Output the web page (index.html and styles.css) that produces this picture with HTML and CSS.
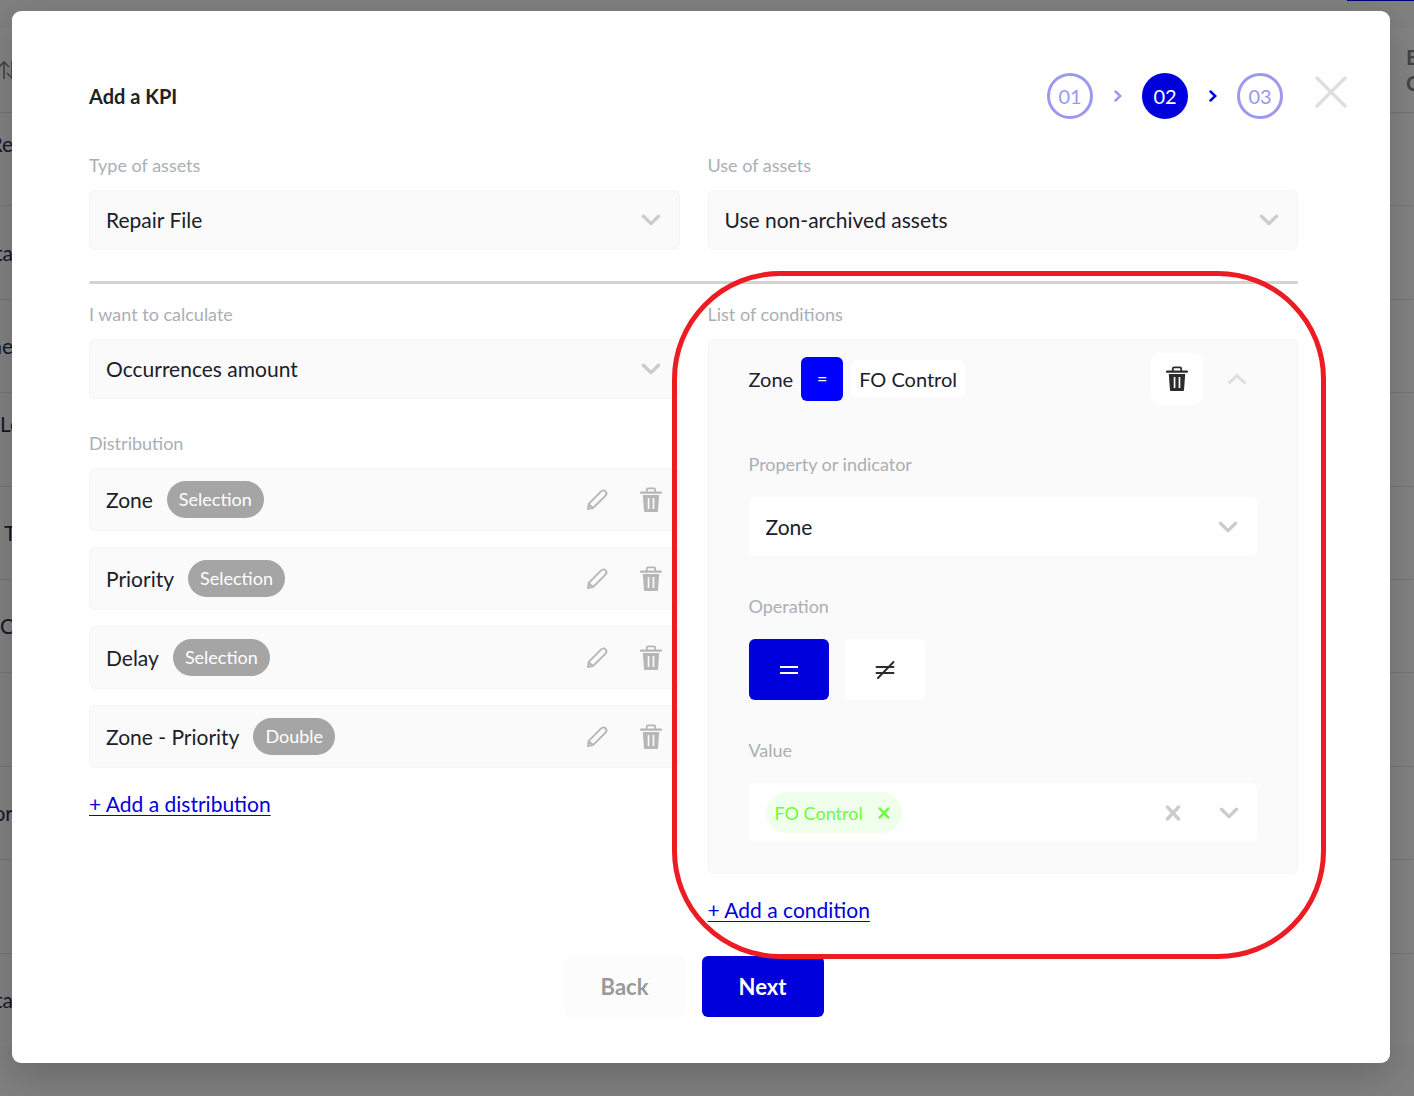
FILE: index.html
```html
<!DOCTYPE html>
<html lang="en">
<head>
<meta charset="utf-8">
<title>Add a KPI</title>
<meta name="viewport" content="width=device-width, initial-scale=1">
<link rel="stylesheet" href="styles.css">
</head>
<body>
<svg class="sprite" aria-hidden="true">
  <symbol id="chevron" viewBox="0 0 20 12"><path d="M2.500 2.300 10 9.600 17.500 2.300" fill="none" stroke="currentColor" stroke-width="3.400" stroke-linecap="round" stroke-linejoin="round"/></symbol>
  <symbol id="chevron-up" viewBox="0 0 20 12"><path d="M1.600 10.400 10 2.600l8.400 7.800" fill="none" stroke="currentColor" stroke-width="2.800"/></symbol>
  <symbol id="step-arrow" viewBox="0 0 8 12"><path d="M1.500 1.500 6.300 6 1.500 10.500" fill="none" stroke="currentColor" stroke-width="2.400" stroke-linecap="round"/></symbol>
  <symbol id="cross" viewBox="0 0 16 16"><path d="M2.400 2 13.600 14M13.600 2 2.400 14" fill="none" stroke="currentColor" stroke-width="3.400" stroke-linecap="round"/></symbol>
  <symbol id="pencil" viewBox="0 0 22 22"><path d="M2 20 2.700 14.800 14.900 2.600C16.400 1.200 18.200 1.100 19.500 2.300 20.800 3.600 20.600 5.500 19.300 6.800L7.200 18.900ZM2.700 15.200 6.900 18.900" fill="none" stroke="currentColor" stroke-width="1.900" stroke-linejoin="round"/></symbol>
  <symbol id="trash" viewBox="0 0 22 26"><path d="M6.800 5.500V2.600Q6.800 1.300 8.200 1.300H13.800Q15.200 1.300 15.200 2.600V5.500" fill="none" stroke="currentColor" stroke-width="1.800"/><rect x="0" y="4.600" width="22" height="2.200" rx="1" fill="currentColor"/><path fill="currentColor" fill-rule="evenodd" d="M2.800 8H19.200L18 24.200Q17.900 25 17 25H5Q4.100 25 4 24.200ZM7.700 11V22H9.400V11ZM12.600 11V22H14.300V11Z"/></symbol>
</svg>

<div class="backdrop" aria-hidden="true">
  <div class="backdrop-bar"><span class="backdrop-action"></span></div>
  <div class="backdrop-head">
    <svg class="sort-icon" viewBox="0 0 16 20"><path d="M4 19V2M-1 7 4 2 9 7M12 1V18M7 13 12 18 17 13" fill="none" stroke="currentColor" stroke-width="1.600"/></svg>
    <span>E<br>C</span>
  </div>
  <div class="backdrop-rows">
    <div class="backdrop-row"><span class="two-line">Re</span></div>
    <div class="backdrop-row"><span>ta</span></div>
    <div class="backdrop-row"><span>ne</span></div>
    <div class="backdrop-row row-start"><span class="two-line">Le</span></div>
    <div class="backdrop-row row-indent"><span>T</span></div>
    <div class="backdrop-row row-start"><span>C</span></div>
    <div class="backdrop-row"></div>
    <div class="backdrop-row"><span>or</span></div>
    <div class="backdrop-row"></div>
    <div class="backdrop-row"><span>ta</span></div>
  </div>
</div>

<main class="modal" role="dialog" aria-labelledby="title">
  <header class="modal-head">
    <h1 id="title">Add a KPI</h1>
    <ol class="steps">
      <li class="step">01</li>
      <li class="arrow faded"><svg><use href="#step-arrow"/></svg></li>
      <li class="step current">02</li>
      <li class="arrow"><svg><use href="#step-arrow"/></svg></li>
      <li class="step">03</li>
    </ol>
    <button class="icon-button close" type="button" aria-label="Close"><svg viewBox="0 0 32 32"><path d="M2 2 30 30M30 2 2 30" fill="none" stroke="currentColor" stroke-width="3.400" stroke-linecap="round"/></svg></button>
  </header>

  <form class="form">
    <div class="columns">
      <div class="field">
        <label for="asset-type">Type of assets</label>
        <div class="select"><select id="asset-type"><option>Repair File</option></select><svg><use href="#chevron"/></svg></div>
      </div>
      <div class="field">
        <label for="asset-use">Use of assets</label>
        <div class="select"><select id="asset-use"><option>Use non-archived assets</option></select><svg><use href="#chevron"/></svg></div>
      </div>
    </div>

    <hr>

    <div class="columns">
      <section>
        <div class="field">
          <label for="calculation">I want to calculate</label>
          <div class="select"><select id="calculation"><option>Occurrences amount</option></select><svg><use href="#chevron"/></svg></div>
        </div>
        <h2 class="distribution-title">Distribution</h2>
        <ul class="distributions">
          <li><span>Zone</span><span class="badge">Selection</span><button class="icon-button edit" type="button" aria-label="Edit Zone"><svg class="pencil"><use href="#pencil"/></svg></button><button class="icon-button" type="button" aria-label="Delete Zone"><svg class="trash"><use href="#trash"/></svg></button></li>
          <li><span>Priority</span><span class="badge">Selection</span><button class="icon-button edit" type="button" aria-label="Edit Priority"><svg class="pencil"><use href="#pencil"/></svg></button><button class="icon-button" type="button" aria-label="Delete Priority"><svg class="trash"><use href="#trash"/></svg></button></li>
          <li><span>Delay</span><span class="badge">Selection</span><button class="icon-button edit" type="button" aria-label="Edit Delay"><svg class="pencil"><use href="#pencil"/></svg></button><button class="icon-button" type="button" aria-label="Delete Delay"><svg class="trash"><use href="#trash"/></svg></button></li>
          <li><span>Zone - Priority</span><span class="badge">Double</span><button class="icon-button edit" type="button" aria-label="Edit Zone - Priority"><svg class="pencil"><use href="#pencil"/></svg></button><button class="icon-button" type="button" aria-label="Delete Zone - Priority"><svg class="trash"><use href="#trash"/></svg></button></li>
        </ul>
        <a class="add-link" href="#">+ Add a distribution</a>
      </section>

      <section class="conditions">
        <h2>List of conditions</h2>
        <div class="condition">
          <div class="condition-head">
            <span>Zone</span>
            <span class="operator">=</span>
            <span class="operand">FO Control</span>
            <button class="icon-button delete" type="button" aria-label="Delete condition"><svg class="trash"><use href="#trash"/></svg></button>
            <button class="icon-button collapse" type="button" aria-label="Collapse"><svg><use href="#chevron-up"/></svg></button>
          </div>
          <div class="field">
            <label for="property">Property or indicator</label>
            <div class="select"><select id="property"><option>Zone</option></select><svg><use href="#chevron"/></svg></div>
          </div>
          <div class="field">
            <h3>Operation</h3>
            <div class="operations">
              <button class="operation selected" type="button" aria-label="Equal"><svg viewBox="0 0 20 20"><path d="M1 7H19M1 13H19" fill="none" stroke="currentColor" stroke-width="2"/></svg></button>
              <button class="operation" type="button" aria-label="Not equal"><svg viewBox="0 0 20 20"><path d="M1.500 7H18.500M1.500 13H18.500M3 18 18.500 2" fill="none" stroke="currentColor" stroke-width="1.900" stroke-linecap="round"/></svg></button>
            </div>
          </div>
          <div class="field">
            <label for="value">Value</label>
            <div class="multi">
              <span class="chip">FO Control<button class="icon-button" type="button" aria-label="Remove FO Control"><svg><use href="#cross"/></svg></button></span>
              <input id="value" type="text">
              <button class="icon-button clear" type="button" aria-label="Clear"><svg><use href="#cross"/></svg></button>
              <button class="icon-button open" type="button" aria-label="Open"><svg><use href="#chevron"/></svg></button>
            </div>
          </div>
        </div>
        <a class="add-link" href="#">+ Add a condition</a>
        <div class="highlight"></div>
      </section>
    </div>

    <footer class="actions">
      <button class="action back" type="button">Back</button>
      <button class="action next" type="submit">Next</button>
    </footer>
  </form>
</main>
</body>
</html>
```
FILE: styles.css
```css
* { box-sizing: border-box; }

body {
  margin: 0;
  min-height: 100vh;
  padding: 11px 24px 32px 12px;
  position: relative;
  overflow-x: hidden;
  background: #808080;
  color: #1b202b;
  font: 21px/26px Lato, "Open Sans", sans-serif;
}

h1, h2, h3, ul, ol { margin: 0; padding: 0; }
ul, ol { list-style: none; }
svg { display: block; flex: none; }
button, input, select { font: inherit; color: inherit; }
.sprite { position: absolute; width: 0; height: 0; }

/* Dimmed page behind the dialog */
.backdrop {
  position: absolute;
  inset: 0;
  overflow: hidden;
  color: #16162c;
}
.backdrop-bar { height: 28px; display: flex; justify-content: flex-end; }
.backdrop-action { width: 67px; height: 1px; background: #000078; }
.backdrop-head {
  height: 85px;
  display: flex;
  justify-content: space-between;
  align-items: center;
  background: #838383;
  border-bottom: 1px solid #757575;
  color: #444;
  font-weight: 700;
}
.backdrop-head span { width: 8px; }
.sort-icon { width: 16px; height: 20px; }
.backdrop-rows { height: 933px; display: flex; flex-direction: column; background: #838383; }
.backdrop-row {
  flex: 1;
  display: flex;
  align-items: center;
  border-bottom: 1px solid #777;
}
.backdrop-row span { width: 13px; display: flex; justify-content: flex-end; line-height: 30px; }
.backdrop-row .two-line { height: 60px; }
.backdrop-row.row-start span, .backdrop-row.row-indent span { justify-content: flex-start; }
.row-indent { padding-left: 4px; }
.backdrop-row:last-child { border: 0; }

.modal {
  position: relative;
  padding: 62px 43px 46px 77px;
  border-radius: 9px;
  background: #fff;
  box-shadow: 0 12px 40px rgba(0, 0, 0, .2);
}

.modal-head { display: flex; align-items: center; height: 46px; margin-bottom: 34px; }
.modal-head h1 { font-size: 20px; line-height: 26px; color: #222; }
.steps { margin-left: auto; display: flex; align-items: center; }
.step {
  width: 46px;
  height: 46px;
  display: grid;
  place-items: center;
  border: 3px solid #9c98f0;
  border-radius: 50%;
  color: #9c98f0;
  font-size: 20px;
}
.step.current { background: #0000dc; border-color: #0000dc; color: #fff; }
.arrow { width: 49px; display: grid; place-items: center; color: #0000dc; }
.arrow svg { width: 8px; height: 12px; }
.arrow.faded { color: #9c98f0; }

.icon-button {
  padding: 0;
  border: 0;
  background: none;
  display: grid;
  place-items: center;
  color: #b6b6b6;
  cursor: pointer;
}
.close { margin: 0 0 8px 32px; color: #dedede; }
.close svg { width: 32px; height: 32px; }
.pencil { width: 22px; height: 22px; }
.trash { width: 22px; height: 26px; }

.form { margin-right: 49px; }
.columns { display: grid; grid-template-columns: 1fr 1fr; gap: 28px; }
.field label, h2, h3 {
  display: block;
  margin-bottom: 13px;
  color: #a9afb6;
  font-size: 18px;
  font-weight: 400;
  line-height: 24px;
}
.select { display: grid; align-items: center; }
.select select {
  grid-area: 1 / 1;
  width: 100%;
  height: 60px;
  padding: 0 48px 0 16px;
  appearance: none;
  border: 1px solid #f4f5f5;
  border-radius: 6px;
  background: #fafafa;
}
.select svg {
  grid-area: 1 / 1;
  justify-self: end;
  margin-right: 19px;
  width: 20px;
  height: 12px;
  color: #ccc;
  pointer-events: none;
}
hr { height: 3px; margin: 31px 0 18px; border: 0; border-radius: 2px; background: #d3d3d3; }

.distribution-title { margin-top: 32px; }
.distributions { display: grid; gap: 16px; }
.distributions li {
  height: 63px;
  padding: 0 17px 0 16px;
  display: flex;
  align-items: center;
  border: 1px solid #f4f5f5;
  border-radius: 6px;
  background: #fafafa;
}
.badge {
  height: 37px;
  margin-left: 14px;
  padding: 0 12px;
  border-radius: 19px;
  background: #a5a5a5;
  color: #fff;
  font-size: 18px;
  line-height: 37px;
}
.edit { margin: 0 32px 0 auto; }

.add-link {
  display: inline-block;
  margin-top: 23px;
  color: #0000dc;
  text-decoration-thickness: 1px;
  text-underline-offset: 3px;
}

.conditions { position: relative; }
.condition {
  padding: 13px 40px 31px;
  border: 1px solid #f4f5f5;
  border-radius: 6px;
  background: #fafafa;
}
.condition-head { display: flex; align-items: center; font-size: 20px; }
.operator {
  width: 42px;
  height: 44px;
  margin: 0 8px;
  border-radius: 6px;
  background: #00f;
  color: #fff;
  font-size: 18px;
  line-height: 42px;
  text-align: center;
}
.operand { height: 38px; padding: 0 8px; border-radius: 6px; background: #fff; line-height: 38px; }
.delete {
  width: 52px;
  height: 52px;
  margin-left: auto;
  border-radius: 10px;
  background: #fff;
  color: #2c2c2c;
}
.collapse { margin: 0 10px 0 24px; color: #dedede; }
.collapse svg { width: 20px; height: 12px; }

.condition .field { margin-top: 38px; }
.condition-head + .field { margin-top: 47px; }
.condition .field label, h3 { margin-bottom: 21px; }
.condition .select select { height: 59px; border-color: #fff; background: #fff; }
.operations { display: flex; gap: 16px; }
.operation {
  width: 80px;
  height: 61px;
  padding: 0;
  display: grid;
  place-items: center;
  border: 0;
  border-radius: 6px;
  background: #fff;
  color: #2c2c2c;
}
.operation.selected { background: #0000dc; color: #fff; }
.operation svg { width: 20px; height: 20px; }

.multi {
  height: 59px;
  padding: 0 18px 0 17px;
  display: flex;
  align-items: center;
  border-radius: 6px;
  background: #fff;
}
.multi input { flex: 1; min-width: 0; padding: 0 8px; border: 0; outline: 0; background: none; }
.chip {
  height: 41px;
  padding: 0 12px 0 9px;
  display: flex;
  align-items: center;
  gap: 15px;
  border-radius: 21px;
  background: #f0ffeb;
  color: #6cff33;
  font-size: 18px;
}
.chip .icon-button { color: #6cff33; }
.chip svg { width: 12px; height: 12px; }
.clear, .open { color: #ccc; }
.clear svg { width: 16px; height: 16px; }
.open { margin-left: 38px; }
.open svg { width: 20px; height: 12px; }

/* Rounded outline that marks the conditions panel */
.highlight {
  position: absolute;
  inset: -31px -28px -36px -36px;
  z-index: 1;
  border: 5px solid #ed1c24;
  border-radius: 108px;
  pointer-events: none;
}

.actions { margin-top: 33px; display: flex; justify-content: center; gap: 16px; }
.action {
  width: 122px;
  height: 61px;
  padding: 0;
  border: 0;
  border-radius: 6px;
  font-size: 22px;
  font-weight: 700;
}
.back { background: #fcfcfc; color: #999; }
.next { background: #0000dc; color: #fff; }
```
